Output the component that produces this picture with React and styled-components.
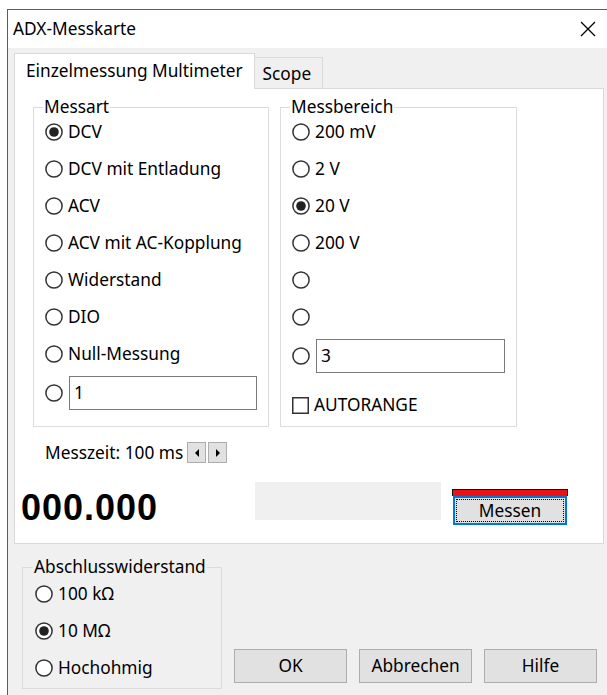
import React from "react";
import styled, { createGlobalStyle } from "styled-components";

const Global = createGlobalStyle`
  html, body {
    margin: 0;
    padding: 0;
    background: #ffffff;
    overflow: hidden;
  }
  body {
    font-family: "Noto Sans", sans-serif;
    font-size: 17.3px;
    line-height: 20px;
    color: #000;
  }
  * { box-sizing: border-box; }
`;

const Window = styled.div`
  margin: 9px 0 0 7px;
  width: 600px;
  height: 700px;
  border-left: 1px solid #5c5c5c;
  border-top: 1px solid #5c5c5c;
  background: #f0f0f0;
  display: flex;
  flex-direction: column;
`;

const TitleBar = styled.div`
  height: 38px;
  background: #ffffff;
  display: flex;
  align-items: center;
  justify-content: space-between;
  padding: 0 11px 0 5px;
`;

const ClientArea = styled.div`
  padding: 5px 0 0 6px;
  display: flex;
  flex-direction: column;
`;

const TabStrip = styled.div`
  display: flex;
  align-items: flex-end;
  position: relative;
  z-index: 1;
  margin-bottom: -1px;
`;

const Tab = styled.div`
  display: flex;
  align-items: center;
  border: 1px solid #d9d9d9;
  border-bottom: none;
  height: ${(p) => (p.$active ? "36px" : "31px")};
  margin-bottom: ${(p) => (p.$active ? "0" : "1px")};
  padding: ${(p) => (p.$active ? "0 11px 2px 11px" : "1px 11px 0 8px")};
  background: ${(p) => (p.$active ? "#ffffff" : "#f0f0f0")};
  border-left: ${(p) => (p.$active ? "1px solid #d9d9d9" : "none")};
`;

const Panel = styled.div`
  width: 590px;
  background: #ffffff;
  border: 1px solid #d9d9d9;
  padding: 8px 0 17px 6px;
`;

const GroupsRow = styled.div`
  display: grid;
  grid-template-columns: 236px 237px;
  column-gap: 11px;
  margin-left: 12px;
`;

const Group = styled.fieldset`
  margin: 0;
  min-width: 0;
  border: 1px solid #dcdcdc;
  padding: ${(p) => p.$pad || "0 11px 6px 10px"};
  width: ${(p) => p.$width || "auto"};
`;

const Legend = styled.legend`
  padding: 0 1px;
  margin-left: -1px;
  line-height: 20px;
`;

const Options = styled.div`
  display: flex;
  flex-direction: column;
  gap: 7px;
`;

const Row = styled.div`
  display: flex;
  align-items: center;
  gap: 5px;
  min-height: 30px;
  margin-left: 1px;
  margin-top: ${(p) => p.$extra || "0"};
`;

const ValueBox = styled.div`
  flex: 1;
  height: 34px;
  margin-left: 1px;
  border: 1px solid #7a7a7a;
  background: #fff;
  padding: 0 4px;
  display: flex;
  align-items: center;
`;

const TimeRow = styled.div`
  display: flex;
  align-items: center;
  margin: 14px 0 0 24px;
  height: 23px;
`;

const Spinner = styled.div`
  display: flex;
  gap: 2px;
  margin-left: 4px;
`;

const SpinButton = styled.div`
  width: 19px;
  height: 21px;
  background: #e1e1e1;
  border: 1px solid #adadad;
  display: flex;
  align-items: center;
  justify-content: center;
`;

const DisplayRow = styled.div`
  display: flex;
  align-items: flex-start;
  margin-top: 18px;
`;

const Reading = styled.div`
  width: 234px;
  margin-top: 8px;
  font-family: "Liberation Sans", Arial, sans-serif;
  font-weight: bold;
  font-size: 36px;
  line-height: 36px;
  letter-spacing: 1px;
`;

const StatusField = styled.div`
  width: 186px;
  height: 38px;
  background: #f0f0f0;
`;

const MeasureColumn = styled.div`
  width: 116px;
  margin: 7px 0 0 11px;
  display: flex;
  flex-direction: column;
  align-items: center;
`;

const Indicator = styled.div`
  width: 116px;
  height: 7px;
  background: #ee1111;
  border: 1px solid #111;
  border-bottom: none;
`;

const MeasureButton = styled.div`
  width: 114px;
  height: 29px;
  background: #e1e1e1;
  border: 2px solid #0078d7;
  outline: 1px dotted #000;
  outline-offset: -4px;
  display: flex;
  align-items: center;
  justify-content: center;
`;

const BottomArea = styled.div`
  display: flex;
  align-items: flex-end;
  margin: 13px 0 0 8px;
`;

const ButtonBar = styled.div`
  display: flex;
  gap: 12px;
  margin: 0 0 6px 12px;
`;

const DialogButton = styled.div`
  width: 113px;
  height: 34px;
  background: #e1e1e1;
  border: 1px solid #adadad;
  display: flex;
  align-items: center;
  justify-content: center;
`;

const CloseIcon = () => (
  <svg width="16" height="16" viewBox="0 0 16 16">
    <path d="M1 1 L15 15 M15 1 L1 15" stroke="#000" strokeWidth="1.3" fill="none" />
  </svg>
);

const RadioMark = ({ checked }) => (
  <svg width="18" height="18" viewBox="0 0 18 18" style={{ flex: "none" }}>
    <circle cx="9" cy="9" r="8.1" fill="#fff" stroke="#333" strokeWidth="1.5" />
    {checked && <circle cx="9" cy="9" r="4.8" fill="#222" />}
  </svg>
);

const CheckMark = () => (
  <svg width="17" height="17" viewBox="0 0 17 17" style={{ flex: "none" }}>
    <rect x="0.75" y="0.75" width="15.5" height="15.5" fill="#fff" stroke="#333" strokeWidth="1.5" />
  </svg>
);

const Arrow = ({ dir }) => (
  <svg width="6" height="8" viewBox="0 0 6 8">
    {dir === "left" ? <path d="M5 0 L1 4 L5 8 Z" fill="#000" /> : <path d="M1 0 L5 4 L1 8 Z" fill="#000" />}
  </svg>
);

const Radio = ({ label, checked, extra }) => (
  <Row $extra={extra}>
    <RadioMark checked={checked} />
    {label && <span>{label}</span>}
  </Row>
);

const RadioInput = ({ value }) => (
  <Row>
    <RadioMark />
    <ValueBox>{value}</ValueBox>
  </Row>
);

const modes = [
  { label: "DCV", checked: true },
  { label: "DCV mit Entladung" },
  { label: "ACV" },
  { label: "ACV mit AC-Kopplung" },
  { label: "Widerstand" },
  { label: "DIO" },
  { label: "Null-Messung" },
];

const ranges = [
  { label: "200 mV" },
  { label: "2 V" },
  { label: "20 V", checked: true },
  { label: "200 V" },
  { label: "" },
  { label: "" },
];

const terminations = [
  { label: "100 kΩ" },
  { label: "10 MΩ", checked: true },
  { label: "Hochohmig" },
];

export default function App() {
  return (
    <>
      <Global />
      <Window>
        <TitleBar>
          <span>ADX-Messkarte</span>
          <CloseIcon />
        </TitleBar>
        <ClientArea>
          <TabStrip>
            <Tab $active>Einzelmessung Multimeter</Tab>
            <Tab>Scope</Tab>
          </TabStrip>
          <Panel>
            <GroupsRow>
              <Group>
                <Legend>Messart</Legend>
                <Options>
                  {modes.map((m) => (
                    <Radio key={m.label} label={m.label} checked={m.checked} />
                  ))}
                  <RadioInput value="1" />
                </Options>
              </Group>
              <Group>
                <Legend>Messbereich</Legend>
                <Options>
                  {ranges.map((r, i) => (
                    <Radio key={i} label={r.label} checked={r.checked} />
                  ))}
                  <RadioInput value="3" />
                  <Row $extra="10px">
                    <CheckMark />
                    <span>AUTORANGE</span>
                  </Row>
                </Options>
              </Group>
            </GroupsRow>
            <TimeRow>
              <span>Messzeit: 100 ms</span>
              <Spinner>
                <SpinButton>
                  <Arrow dir="left" />
                </SpinButton>
                <SpinButton>
                  <Arrow dir="right" />
                </SpinButton>
              </Spinner>
            </TimeRow>
            <DisplayRow>
              <Reading>000.000</Reading>
              <StatusField />
              <MeasureColumn>
                <Indicator />
                <MeasureButton>Messen</MeasureButton>
              </MeasureColumn>
            </DisplayRow>
          </Panel>
          <BottomArea>
            <Group $width="200px" $pad="2px 10px 5px 11px">
              <Legend>Abschlusswiderstand</Legend>
              <Options>
                {terminations.map((t) => (
                  <Radio key={t.label} label={t.label} checked={t.checked} />
                ))}
              </Options>
            </Group>
            <ButtonBar>
              <DialogButton>OK</DialogButton>
              <DialogButton>Abbrechen</DialogButton>
              <DialogButton>Hilfe</DialogButton>
            </ButtonBar>
          </BottomArea>
        </ClientArea>
      </Window>
    </>
  );
}
